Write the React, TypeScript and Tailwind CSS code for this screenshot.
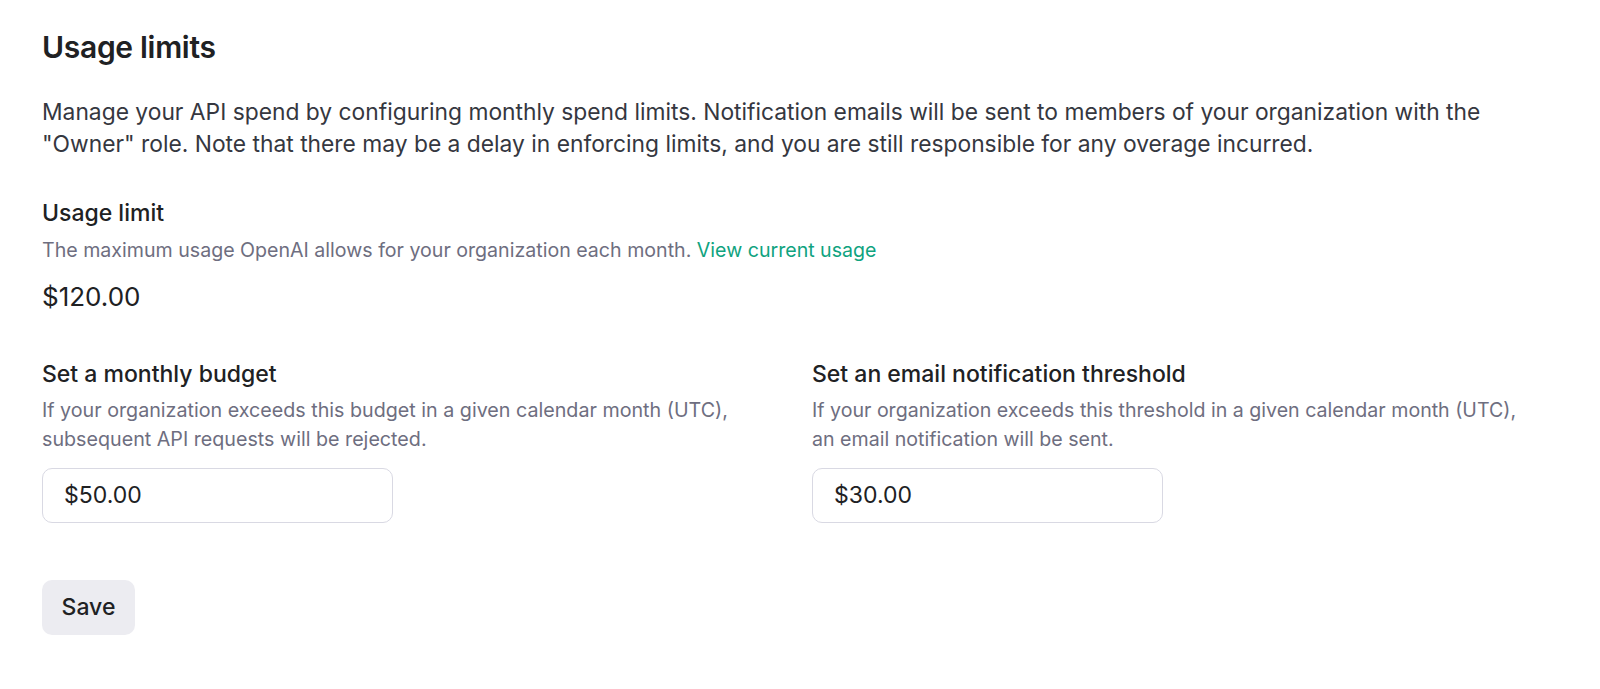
import React from "react";

export default function App() {
  return (
    <div className="min-h-screen bg-white text-[#202123]" style={{ fontFamily: "Inter, 'Liberation Sans', sans-serif" }}>
      <div className="pl-[42px] pr-[40px] pt-[28px]">
        <h1 className="text-[30px] leading-[38px] font-semibold tracking-[-0.3px]">Usage limits</h1>
        <p className="mt-[30px] text-[22.8px] leading-[32px] text-[#353740] max-w-[1470px]">
          Manage your API spend by configuring monthly spend limits. Notification emails will be sent to members of your organization with the "Owner" role. Note that there may be a delay in enforcing limits, and you are still responsible for any overage incurred.
        </p>
        <div className="mt-[37px]">
          <div className="text-[23px] leading-[32px] font-medium text-[#202123]">Usage limit</div>
          <div className="mt-[7px] text-[19.6px] leading-[28px] text-[#6e6e80]">
            The maximum usage OpenAI allows for your organization each month.{" "}
            <span className="text-[#10a37f]">View current usage</span>
          </div>
          <div className="mt-[16px] text-[26px] leading-[34px] text-[#202123]">$120.00</div>
        </div>
        <div className="mt-[44px] grid grid-cols-[770px_1fr]">
          <div>
            <div className="text-[23px] leading-[32px] font-medium">Set a monthly budget</div>
            <div className="mt-[6px] text-[19.7px] leading-[29px] text-[#6e6e80]">
              If your organization exceeds this budget in a given calendar month (UTC),
              <br />
              subsequent API requests will be rejected.
            </div>
            <div className="mt-[14px] w-[351px] h-[55px] rounded-[10px] border border-[#d9d9e3] flex items-center px-[21px] text-[23px] text-[#202123]">
              $50.00
            </div>
          </div>
          <div>
            <div className="text-[23px] leading-[32px] font-medium">Set an email notification threshold</div>
            <div className="mt-[6px] text-[19.6px] leading-[29px] text-[#6e6e80]">
              If your organization exceeds this threshold in a given calendar month (UTC),
              <br />
              an email notification will be sent.
            </div>
            <div className="mt-[14px] w-[351px] h-[55px] rounded-[10px] border border-[#d9d9e3] flex items-center px-[21px] text-[23px] text-[#202123]">
              $30.00
            </div>
          </div>
        </div>
        <button className="mt-[57px] w-[93px] h-[55px] rounded-[10px] bg-[#ececf1] text-[23px] font-medium text-[#202123]">
          Save
        </button>
      </div>
    </div>
  );
}
